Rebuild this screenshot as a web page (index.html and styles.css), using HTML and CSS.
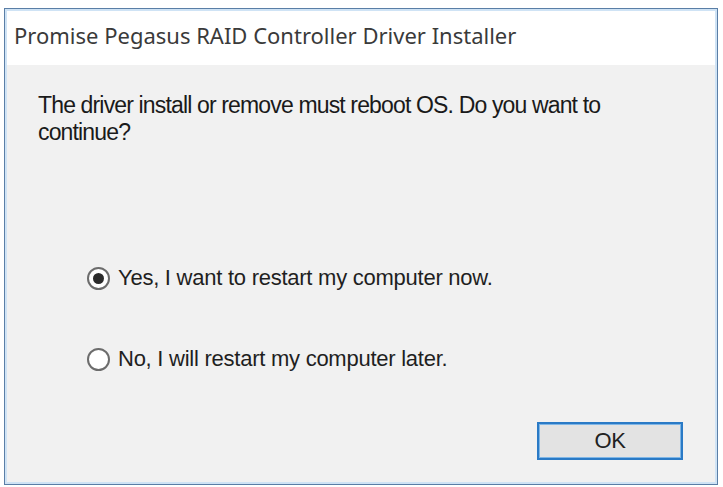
FILE: index.html
```html
<!DOCTYPE html>
<html>
<head>
<meta charset="utf-8">
<link rel="stylesheet" href="styles.css">
</head>
<body>
<div class="window">
  <div class="titlebar">Promise Pegasus RAID Controller Driver Installer</div>
  <div class="content">
    <p class="message">The driver install or remove must reboot OS. Do you want to continue?</p>
    <div class="options">
      <label class="option"><span class="radio checked"></span><span class="label">Yes, I want to restart my computer now.</span></label>
      <label class="option"><span class="radio"></span><span class="label">No, I will restart my computer later.</span></label>
    </div>
    <div class="actions">
      <button class="ok">OK</button>
    </div>
  </div>
</div>
</body>
</html>
```
FILE: styles.css
```css
html, body {
  margin: 0;
  padding: 0;
  background: #ffffff;
}
body {
  width: 723px;
  height: 487px;
  padding: 8px 5px 2px 4px;
  box-sizing: border-box;
  display: flex;
}
.window {
  flex: 1;
  display: flex;
  flex-direction: column;
  border: 1px solid #5a7ea6;
  box-shadow: inset 0 0 0 2px #cfe3f5;
  background: #f1f1f1;
}
.titlebar {
  height: 54px;
  margin: 2px 2px 0 2px;
  background: #ffffff;
  box-sizing: border-box;
  padding: 9px 0 0 7px;
  font-family: "Noto Sans", "Open Sans", sans-serif;
  font-size: 22px;
  color: #3a3a3a;
  letter-spacing: 0;
}
.content {
  flex: 1;
  display: flex;
  flex-direction: column;
  padding: 0 2px 2px 33px;
  font-family: "Liberation Sans", Arial, sans-serif;
  color: #1a1a1a;
}
.message {
  margin: 27px 0 0 0;
  width: 610px;
  font-size: 23px;
  line-height: 27px;
  letter-spacing: -0.85px;
}
.options {
  display: flex;
  flex-direction: column;
  gap: 55px;
  margin: 119px 0 0 49px;
}
.option {
  display: flex;
  align-items: center;
  gap: 8px;
  font-size: 22px;
  letter-spacing: -0.25px;
  color: #1f1f1f;
}
.radio {
  width: 23px;
  height: 23px;
  border-radius: 50%;
  border: 2px solid #6c6c6c;
  background: #ffffff;
  box-sizing: border-box;
  position: relative;
  flex: none;
}
.radio.checked::after {
  content: "";
  position: absolute;
  left: 4px;
  top: 4px;
  width: 11px;
  height: 11px;
  border-radius: 50%;
  background: #2b2b2b;
}
.actions {
  margin-top: auto;
  display: flex;
  justify-content: flex-end;
  padding: 0 32px 22px 0;
}
.ok {
  width: 146px;
  height: 38px;
  border: 2px solid #2a7ac6;
  box-shadow: inset 0 0 0 1px #7fb6e6;
  background: #e3e3e3;
  font-family: "Liberation Sans", Arial, sans-serif;
  font-size: 22px;
  letter-spacing: -0.5px;
  color: #222;
  padding: 0;
}
```
